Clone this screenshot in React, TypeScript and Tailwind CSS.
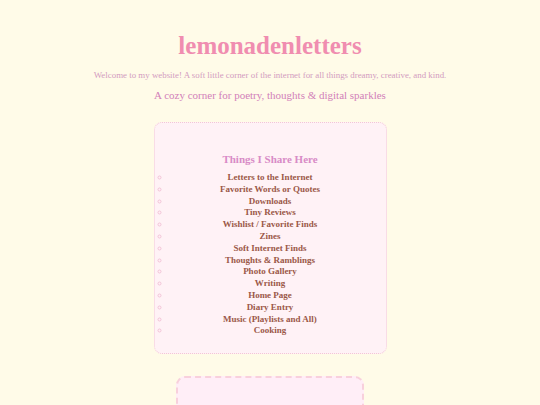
const items = [
  "Letters to the Internet",
  "Favorite Words or Quotes",
  "Downloads",
  "Tiny Reviews",
  "Wishlist / Favorite Finds",
  "Zines",
  "Soft Internet Finds",
  "Thoughts & Ramblings",
  "Photo Gallery",
  "Writing",
  "Home Page",
  "Diary Entry",
  "Music (Playlists and All)",
  "Cooking",
];

export default function App() {
  return (
    <div className="min-h-[405px] bg-[#fffbe8] font-['Liberation_Serif',Georgia,serif] flex flex-col items-center pt-[30px]">
      {/* header */}
      <h1 className="text-[25px] font-bold leading-[32px] text-[#f08db0]">lemonadenletters</h1>
      <p className="mt-[7px] text-[8.9px] leading-[12px] text-[#d39bc0]">
        Welcome to my website! A soft little corner of the internet for all things dreamy, creative, and kind.
      </p>
      <p className="mt-[7px] text-[11px] leading-[14px] text-[#d27fb9]">
        A cozy corner for poetry, thoughts &amp; digital sparkles
      </p>

      {/* things i share */}
      <section className="mt-[20px] w-[233px] rounded-[8px] border border-dotted border-[#f3c6d6] bg-[#fff2f6] px-[15px] pt-[29px] pb-[16px]">
        <h2 className="text-center text-[11px] font-bold leading-[14px] text-[#d88bc6]">Things I Share Here</h2>
        <ul className="mt-[6px] list-[circle] marker:text-[#f3c3d6]">
          {items.map((item, i) => (
            <li key={i} className="text-center text-[9px] font-bold leading-[11.8px] text-[#9b5848]">
              {item}
            </li>
          ))}
        </ul>
      </section>

      {/* next box */}
      <section className="mt-[22px] h-[60px] w-[188px] rounded-[9px] border-2 border-dashed border-[#f8d0dc] bg-[#ffeef7]" />
    </div>
  );
}
